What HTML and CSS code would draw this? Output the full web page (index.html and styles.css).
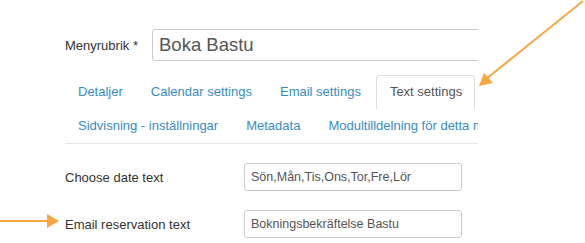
FILE: index.html
```html
<!DOCTYPE html>
<html lang="en">
<head>
    <meta charset="UTF-8">
    <title>Boka Bastu</title>
    <link rel="stylesheet" href="styles.css">
</head>
<body>
    <div class="page">
        <div class="title-row">
            <label class="title-label">Menyrubrik *</label>
            <input class="title-input" type="text" value="Boka Bastu">
        </div>
        <ul class="tabs">
            <li><a href="#">Detaljer</a></li>
            <li><a href="#">Calendar settings</a></li>
            <li><a href="#">Email settings</a></li>
            <li class="active"><a href="#">Text settings</a></li>
            <li><a href="#">Sidvisning - inställningar</a></li>
            <li><a href="#">Metadata</a></li>
            <li class="last"><a href="#">Modultilldelning för detta menyval</a></li>
        </ul>
        <div class="field">
            <label>Choose date text</label>
            <input type="text" value="Sön,Mån,Tis,Ons,Tor,Fre,Lör">
        </div>
        <div class="field">
            <label>Email reservation text</label>
            <input type="text" value="Bokningsbekräftelse Bastu">
        </div>
    </div>
    <svg class="arrows" width="585" height="243" viewBox="0 0 585 243">
        <line x1="583" y1="1" x2="486" y2="79" stroke="#f8a743" stroke-width="2"/>
        <polygon points="479,86 484,73 493,83" fill="#f8a743"/>
        <line x1="0" y1="221" x2="49" y2="221" stroke="#f8a743" stroke-width="2"/>
        <polygon points="59,221 47,214 47,228" fill="#f8a743"/>
    </svg>
</body>
</html>
```

FILE: styles.css
```css
body {
    margin: 0;
    font-family: "Liberation Sans", Arial, sans-serif;
    font-size: 13px;
    color: #333;
    background-color: #fff;
}
.page {
    width: 413px;
    padding: 29px 0 0 65px;
    overflow: hidden;
}
.title-row {
    display: flex;
    align-items: center;
}
.title-label {
    width: 87px;
    flex-shrink: 0;
}
.title-input {
    width: 400px;
    flex-shrink: 0;
    height: 32px;
    box-sizing: border-box;
    padding: 0 6px;
    border: 1px solid #ccc;
    border-radius: 3px;
    font-family: inherit;
    font-size: 18.5px;
    color: #555;
}
.tabs {
    list-style: none;
    margin: 14px 0 0;
    padding: 0;
    display: flex;
    flex-wrap: wrap;
    width: 413px;
    border-bottom: 1px solid #e6e6e6;
}
.tabs li {
    margin-right: 2px;
    white-space: nowrap;
}
.tabs li.last {
    flex: 1 1 0;
    min-width: 0;
    overflow: hidden;
    margin-right: 0;
}
.tabs a {
    display: block;
    padding: 6px 12px 7px;
    line-height: 20px;
    border: 1px solid transparent;
    border-bottom: none;
    border-radius: 4px 4px 0 0;
    color: #3a8cc3;
    text-decoration: none;
}
.tabs .active a {
    border-color: #ddd;
    color: #555;
    padding-left: 13px;
}
.field {
    display: flex;
    align-items: center;
    margin-top: 19px;
}
.tabs + .field {
    margin-top: 19px;
}
.field label {
    width: 179px;
    flex-shrink: 0;
}
.field input {
    width: 218px;
    height: 28px;
    box-sizing: border-box;
    padding: 0 6px;
    border: 1px solid #ccc;
    border-radius: 3px;
    font-family: inherit;
    font-size: 12.5px;
    color: #555;
}
.arrows {
    position: absolute;
    top: 0;
    left: 0;
}
```
